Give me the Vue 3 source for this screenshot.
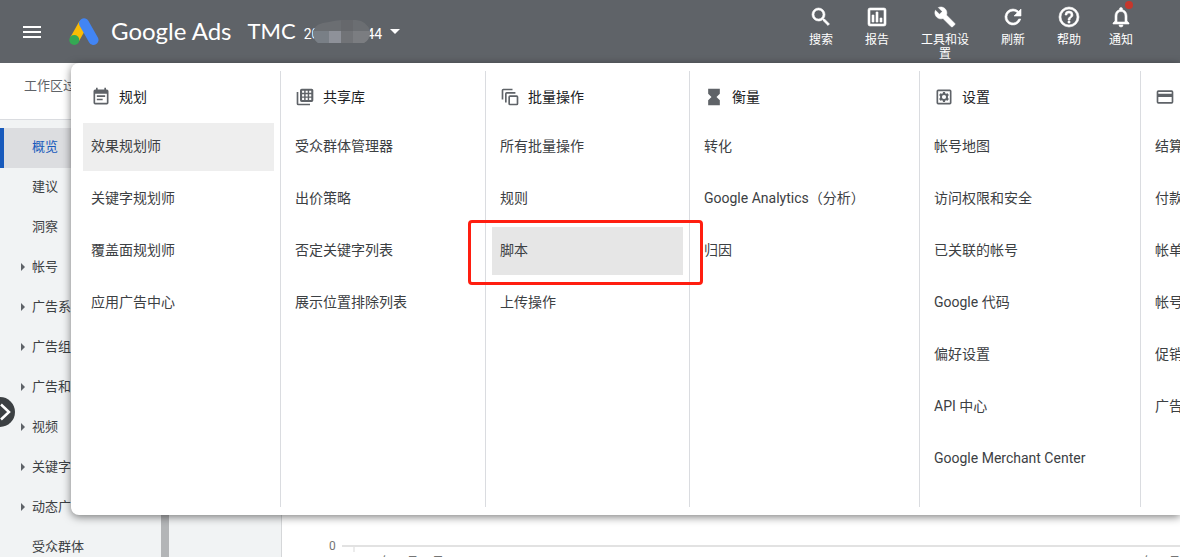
<script setup>
const actions = [
  { id: 'search', label: '搜索' },
  { id: 'reports', label: '报告' },
  { id: 'tools', label: '工具和设置' },
  { id: 'refresh', label: '刷新' },
  { id: 'help', label: '帮助' },
  { id: 'alerts', label: '通知' }
]

const actionIcons = {
  search: 'M15.5 14h-.79l-.28-.27A6.47 6.47 0 0 0 16 9.5 6.5 6.5 0 1 0 9.5 16c1.61 0 3.09-.59 4.23-1.57l.27.28v.79l5 4.99L20.49 19l-4.99-5zm-6 0C7.01 14 5 11.99 5 9.5S7.01 5 9.5 5 14 7.01 14 9.5 11.99 14 9.5 14z',
  reports: 'M19 3H5a2 2 0 0 0-2 2v14a2 2 0 0 0 2 2h14a2 2 0 0 0 2-2V5a2 2 0 0 0-2-2zm0 16H5V5h14v14zM7 10h2v7H7zM11 7h2v10h-2zM15 13h2v4h-2z',
  tools: 'M22.7 19l-9.1-9.1c.9-2.3.4-5-1.5-6.9-2-2-5-2.4-7.4-1.3L9 6 6 9 1.6 4.7C.4 7.1.9 10.1 2.9 12.1c1.900 1.900 4.600 2.400 6.900 1.500l9.100 9.100c.4.400 1 .400 1.400 0l2.300-2.300c.5-.4.5-1.100.1-1.400z',
  refresh: 'M17.65 6.35A7.96 7.96 0 0 0 12 4a8 8 0 1 0 7.73 10h-2.08A6 6 0 1 1 12 6c1.660 0 3.140.690 4.220 1.780L13 11h7V4l-2.350 2.350z',
  help: 'M11 18h2v-2h-2v2zm1-16a10 10 0 1 0 0 20 10 10 0 0 0 0-20zm0 18a8 8 0 1 1 0-16 8 8 0 0 1 0 16zm0-14a4 4 0 0 0-4 4h2c0-1.100.9-2 2-2s2 .9 2 2c0 2-3 1.750-3 5h2c0-2.250 3-2.500 3-5a4 4 0 0 0-4-4z',
  alerts: 'M12 22a2 2 0 0 0 2-2h-4a2 2 0 0 0 2 2zm6-6v-5c0-3.070-1.630-5.640-4.500-6.320V4a1.500 1.500 0 0 0-3 0v.68C7.640 5.360 6 7.920 6 11v5l-2 2v1h16v-1l-2-2zm-2 1H8v-6c0-2.480 1.510-4.500 4-4.500s4 2.020 4 4.500v6z'
}

const nav = [
  { label: '概览', active: true },
  { label: '建议' },
  { label: '洞察' },
  { label: '帐号', group: true },
  { label: '广告系', group: true },
  { label: '广告组', group: true },
  { label: '广告和', group: true },
  { label: '视频', group: true },
  { label: '关键字', group: true },
  { label: '动态广', group: true },
  { label: '受众群体' }
]

const menu = [
  {
    title: '规划',
    icon: 'M17 10H7v2h10v-2zm2-7h-1V1h-2v2H8V1H6v2H5a2 2 0 0 0-2 2v14a2 2 0 0 0 2 2h14a2 2 0 0 0 2-2V5a2 2 0 0 0-2-2zm0 16H5V8h14v11zm-5-5H7v2h7v-2z',
    items: ['效果规划师', '关键字规划师', '覆盖面规划师', '应用广告中心'],
    hover: 0
  },
  {
    title: '共享库',
    icon: 'M4 6H2v14a2 2 0 0 0 2 2h14v-2H4V6zM20 2H8a2 2 0 0 0-2 2v12a2 2 0 0 0 2 2h12a2 2 0 0 0 2-2V4a2 2 0 0 0-2-2zM8.500 4.500h2.500v2.500H8.500zM12.750 4.500h2.500v2.500h-2.500zM17 4.500h2.500v2.500H17zM8.500 8.750h2.500v2.500H8.500zM12.750 8.750h2.500v2.500h-2.500zM17 8.750h2.500v2.500H17zM8.500 13h2.500v2.500H8.500zM12.750 13h2.500v2.500h-2.500zM17 13h2.500v2.500H17z',
    items: ['受众群体管理器', '出价策略', '否定关键字列表', '展示位置排除列表']
  },
  {
    title: '批量操作',
    icon: 'M2 15V4a2 2 0 0 1 2-2h11v2H4v11zM6 18.500V8a2 2 0 0 1 2-2h10.500v2H8v10.500zM12 10h8a2 2 0 0 1 2 2v8a2 2 0 0 1-2 2h-8a2 2 0 0 1-2-2v-8a2 2 0 0 1 2-2zm0 2v8h8v-8z',
    items: ['所有批量操作', '规则', '脚本', '上传操作'],
    marked: 2
  },
  {
    title: '衡量',
    icon: 'M5 2v6h.010L5 8.010 9 12l-4 4 .010.010H5V22h14v-5.990h-.010L19 16l-4-4 4-3.990-.010-.010H19V2z',
    items: ['转化', 'Google Analytics（分析）', '归因']
  },
  {
    title: '设置',
    icon: 'M19 3H5a2 2 0 0 0-2 2v14a2 2 0 0 0 2 2h14a2 2 0 0 0 2-2V5a2 2 0 0 0-2-2zm0 16H5V5h14zM10.800 6h2.400l.4 1.700 1 .5 1.700-.6 1.500 2-1.100 1.400v2l1.100 1.400-1.500 2-1.700-.6-1 .5-.4 1.700h-2.400l-.4-1.700-1-.5-1.700.6-1.500-2L7.300 13v-2L6.200 9.600l1.500-2 1.700.6 1-.5zM12 9.500a2.500 2.500 0 1 0 0 5 2.500 2.500 0 0 0 0-5z',
    items: ['帐号地图', '访问权限和安全', '已关联的帐号', 'Google 代码', '偏好设置', 'API 中心', 'Google Merchant Center']
  },
  {
    title: '',
    icon: 'M20 4H4a2 2 0 0 0-2 2v12a2 2 0 0 0 2 2h16a2 2 0 0 0 2-2V6a2 2 0 0 0-2-2zm0 14H4v-6h16v6zm0-10H4V6h16v2z',
    items: ['结算', '付款', '帐单', '帐号', '促销', '广告']
  }
]
</script>

<template>
  <div class="page">
    <header class="topbar">
      <button class="menu-toggle" type="button" aria-label="主菜单">
        <svg width="24" height="24" viewBox="0 0 24 24"><path fill="#fff" d="M3 18h18v-2H3v2zm0-5h18v-2H3v2zm0-7v2h18V6H3z" /></svg>
      </button>
      <a class="brand" href="#">
        <svg width="30" height="28" viewBox="0 0 30 28">
          <path d="M14.500 5.500L5.500 21.500" stroke="#fbbc04" stroke-width="9.500" />
          <path d="M15 5.300L24.500 22" stroke="#4285f4" stroke-width="10" stroke-linecap="round" />
          <circle cx="5.300" cy="22" r="5" fill="#34a853" />
        </svg>
        <span>Google Ads</span>
      </a>
      <button class="account" type="button">
        <span class="account-name">TMC</span>
        <span class="account-id">
          <span>20</span>
          <svg class="mask" width="57" height="23" viewBox="0 0 57 23">
            <defs><clipPath id="blob"><path d="M0 11Q2 3 16 2Q28-1 43 0Q54 1 57 11Q57 20 51 23H5Q0 20 0 11z" /></clipPath></defs>
            <g clip-path="url(#blob)">
              <rect width="57" height="23" fill="#6b6e72" />
              <rect x="28" width="12" height="11" fill="#66686c" />
              <rect y="11" width="16" height="12" fill="#797f86" />
              <rect x="16" y="11" width="12" height="12" fill="#8e9199" />
              <rect x="28" y="11" width="12" height="12" fill="#717377" />
              <rect x="40" y="11" width="17" height="12" fill="#7b7d81" />
            </g>
          </svg>
          <span>44</span>
        </span>
        <svg width="10" height="5" viewBox="0 0 10 5"><path fill="#fff" d="M0 0h10L5 5z" /></svg>
      </button>
      <nav class="actions">
        <button v-for="a in actions" :key="a.id" type="button" :class="['action', a.id]">
          <span class="action-icon">
            <svg width="24" height="24" viewBox="0 0 24 24"><path fill="#fff" stroke="#fff" stroke-width="0.6" fill-rule="evenodd" :d="actionIcons[a.id]" /></svg>
            <i v-if="a.id === 'alerts'" class="dot"></i>
          </span>
          <span>{{ a.label }}</span>
        </button>
      </nav>
    </header>

    <div class="body">
      <aside class="side">
        <div class="filter">工作区过</div>
        <nav class="side-nav">
          <a v-for="n in nav" :key="n.label" href="#" :class="['side-link', { active: n.active }]">
            <svg v-if="n.group" class="arrow" width="4" height="8" viewBox="0 0 4 8"><path fill="#5f6368" d="M0 0l4 4-4 4z" /></svg>
            <span>{{ n.label }}</span>
          </a>
        </nav>
      </aside>
      <div class="scroll"></div>
      <div class="subnav"></div>
      <main class="content">
        <div class="axis">
          <span class="zero">0</span>
          <div class="line"></div>
        </div>
        <div class="dates"><span>2021年10月11日</span><span>2021年10月17日</span></div>
      </main>

      <section class="mega">
        <div v-for="(c, k) in menu" :key="k" class="column">
          <h2>
            <svg width="20" height="20" viewBox="0 0 24 24"><path fill="#5f6368" fill-rule="evenodd" :d="c.icon" /></svg>
            <span>{{ c.title }}</span>
          </h2>
          <ul>
            <li v-for="(t, i) in c.items" :key="t">
              <a href="#" :class="{ hover: c.hover === i, marked: c.marked === i }">{{ t }}</a>
            </li>
          </ul>
        </div>
      </section>

      <button class="expand" type="button" aria-label="展开">
        <svg width="15" height="30" viewBox="0 0 15 30"><path d="M1 7.500l8 7.500-8 7.500" fill="none" stroke="#fff" stroke-width="2.500" /></svg>
      </button>
    </div>
  </div>
</template>

<style>
body {
  overflow: hidden;
}
</style>

<style scoped>
.page {
  display: flex;
  flex-direction: column;
  height: 100vh;
  overflow: hidden;
  background: #fff;
  color: #3c4043;
  font-family: Roboto, "Noto Sans CJK SC", sans-serif;
  font-size: 14px;
}
.page * {
  box-sizing: border-box;
}
button {
  padding: 0;
  border: 0;
  background: none;
  color: inherit;
  font: inherit;
}
a {
  color: inherit;
  text-decoration: none;
}
svg {
  display: block;
  flex: none;
}
.topbar {
  display: flex;
  align-items: center;
  flex: none;
  height: 63px;
  padding: 0 35px 0 20px;
  background: #5f6368;
  color: #fff;
}
.brand {
  display: flex;
  align-items: center;
  gap: 12px;
  margin-left: 25px;
  font-family: Lato, sans-serif;
  font-size: 24px;
  white-space: nowrap;
}
.brand span,
.account-name {
  padding-bottom: 3px;
}
.account {
  display: flex;
  align-items: center;
  gap: 8px;
  margin-left: 16px;
}
.account-name {
  font-family: Lato, sans-serif;
  font-size: 22px;
}
.account-id {
  display: flex;
  align-items: center;
  padding-top: 4px;
}
.mask {
  position: relative;
  margin: 0 -4px 4px -6px;
}
.actions {
  display: flex;
  align-self: flex-start;
  margin-left: auto;
  padding-top: 5px;
}
.action {
  display: flex;
  flex-direction: column;
  align-items: center;
  gap: 4px;
  width: 56px;
  font-size: 12px;
  line-height: 14px;
}
.action.tools {
  width: 80px;
  padding: 0 16px;
}
.action.alerts {
  width: 48px;
}
.action-icon {
  position: relative;
}
.tools svg {
  padding: 1px;
}
.dot {
  position: absolute;
  top: -4px;
  right: 0;
  width: 8px;
  height: 8px;
  border-radius: 50%;
  background: #c5372c;
}
.body {
  position: relative;
  display: flex;
  flex: 1;
  min-height: 0;
}
.side {
  flex: none;
  width: 161px;
  background: #f1f3f4;
  font-size: 13px;
}
.filter {
  height: 57px;
  padding: 0 24px;
  border-bottom: 1px solid #dadce0;
  background: #fff;
  color: #5f6368;
  line-height: 46px;
}
.side-nav {
  padding-top: 8px;
}
.side-link {
  position: relative;
  display: block;
  height: 40px;
  padding-left: 32px;
  line-height: 38px;
  white-space: nowrap;
}
.side-link.active {
  padding-left: 28px;
  border-left: 4px solid #185abc;
  background: #dcdde0;
  color: #185abc;
}
.arrow {
  position: absolute;
  top: 15px;
  left: 21px;
}
.scroll {
  flex: none;
  width: 8px;
  background: #b3b5b7;
}
.subnav {
  flex: none;
  width: 113px;
  border-right: 1px solid #d5d7d9;
  background: #f1f3f4;
}
.content {
  display: flex;
  flex: 1;
  flex-direction: column;
  justify-content: flex-end;
  min-width: 0;
  padding-left: 47px;
  color: #757575;
  font-size: 12px;
}
.axis {
  display: flex;
  align-items: center;
  gap: 6px;
  height: 14px;
  margin-bottom: 1px;
}
.zero {
  line-height: 14px;
}
.line {
  position: relative;
  flex: 1;
  height: 2px;
  background: #e2e2e2;
}
.line::after {
  content: "";
  position: absolute;
  top: 2px;
  left: 11px;
  width: 2px;
  height: 5px;
  background: #ececec;
}
.dates {
  display: flex;
  justify-content: space-between;
  height: 3px;
  margin-right: -26px;
  padding-left: 25px;
  line-height: 16px;
  white-space: nowrap;
}
.mega {
  position: absolute;
  top: 0;
  right: 0;
  left: 71px;
  display: grid;
  grid-template-columns: 204px 205px 204px 230px 221px 204px;
  padding: 8px 0 8px 6px;
  overflow: hidden;
  border-radius: 8px 0 0 8px;
  background: #fff;
  box-shadow: 0 2px 8px rgba(0, 0, 0, 0.5);
}
.column {
  padding: 0 6px 24px;
  border-right: 1px solid #dadce0;
}
h2 {
  display: flex;
  align-items: center;
  gap: 8px;
  height: 52px;
  margin: 0;
  padding-left: 8px;
  color: #202124;
  font-size: 14px;
  font-weight: 400;
}
h2 span {
  padding-bottom: 3px;
}
ul {
  display: flex;
  flex-direction: column;
  gap: 4px;
  margin: 0;
  padding: 0;
  list-style: none;
}
li a {
  position: relative;
  display: block;
  padding: 0 8px 2px;
  line-height: 46px;
  white-space: nowrap;
}
.hover {
  background: #eee;
}
.marked {
  background: #e6e6e6;
}
.marked::after {
  content: "";
  position: absolute;
  inset: -7px -20px -10px -24px;
  border: 3px solid #ff1e10;
  border-radius: 4px;
}
.expand {
  position: absolute;
  top: 334px;
  left: 0;
  border-radius: 0 15px 15px 0;
  background: #3c4043;
}
</style>
